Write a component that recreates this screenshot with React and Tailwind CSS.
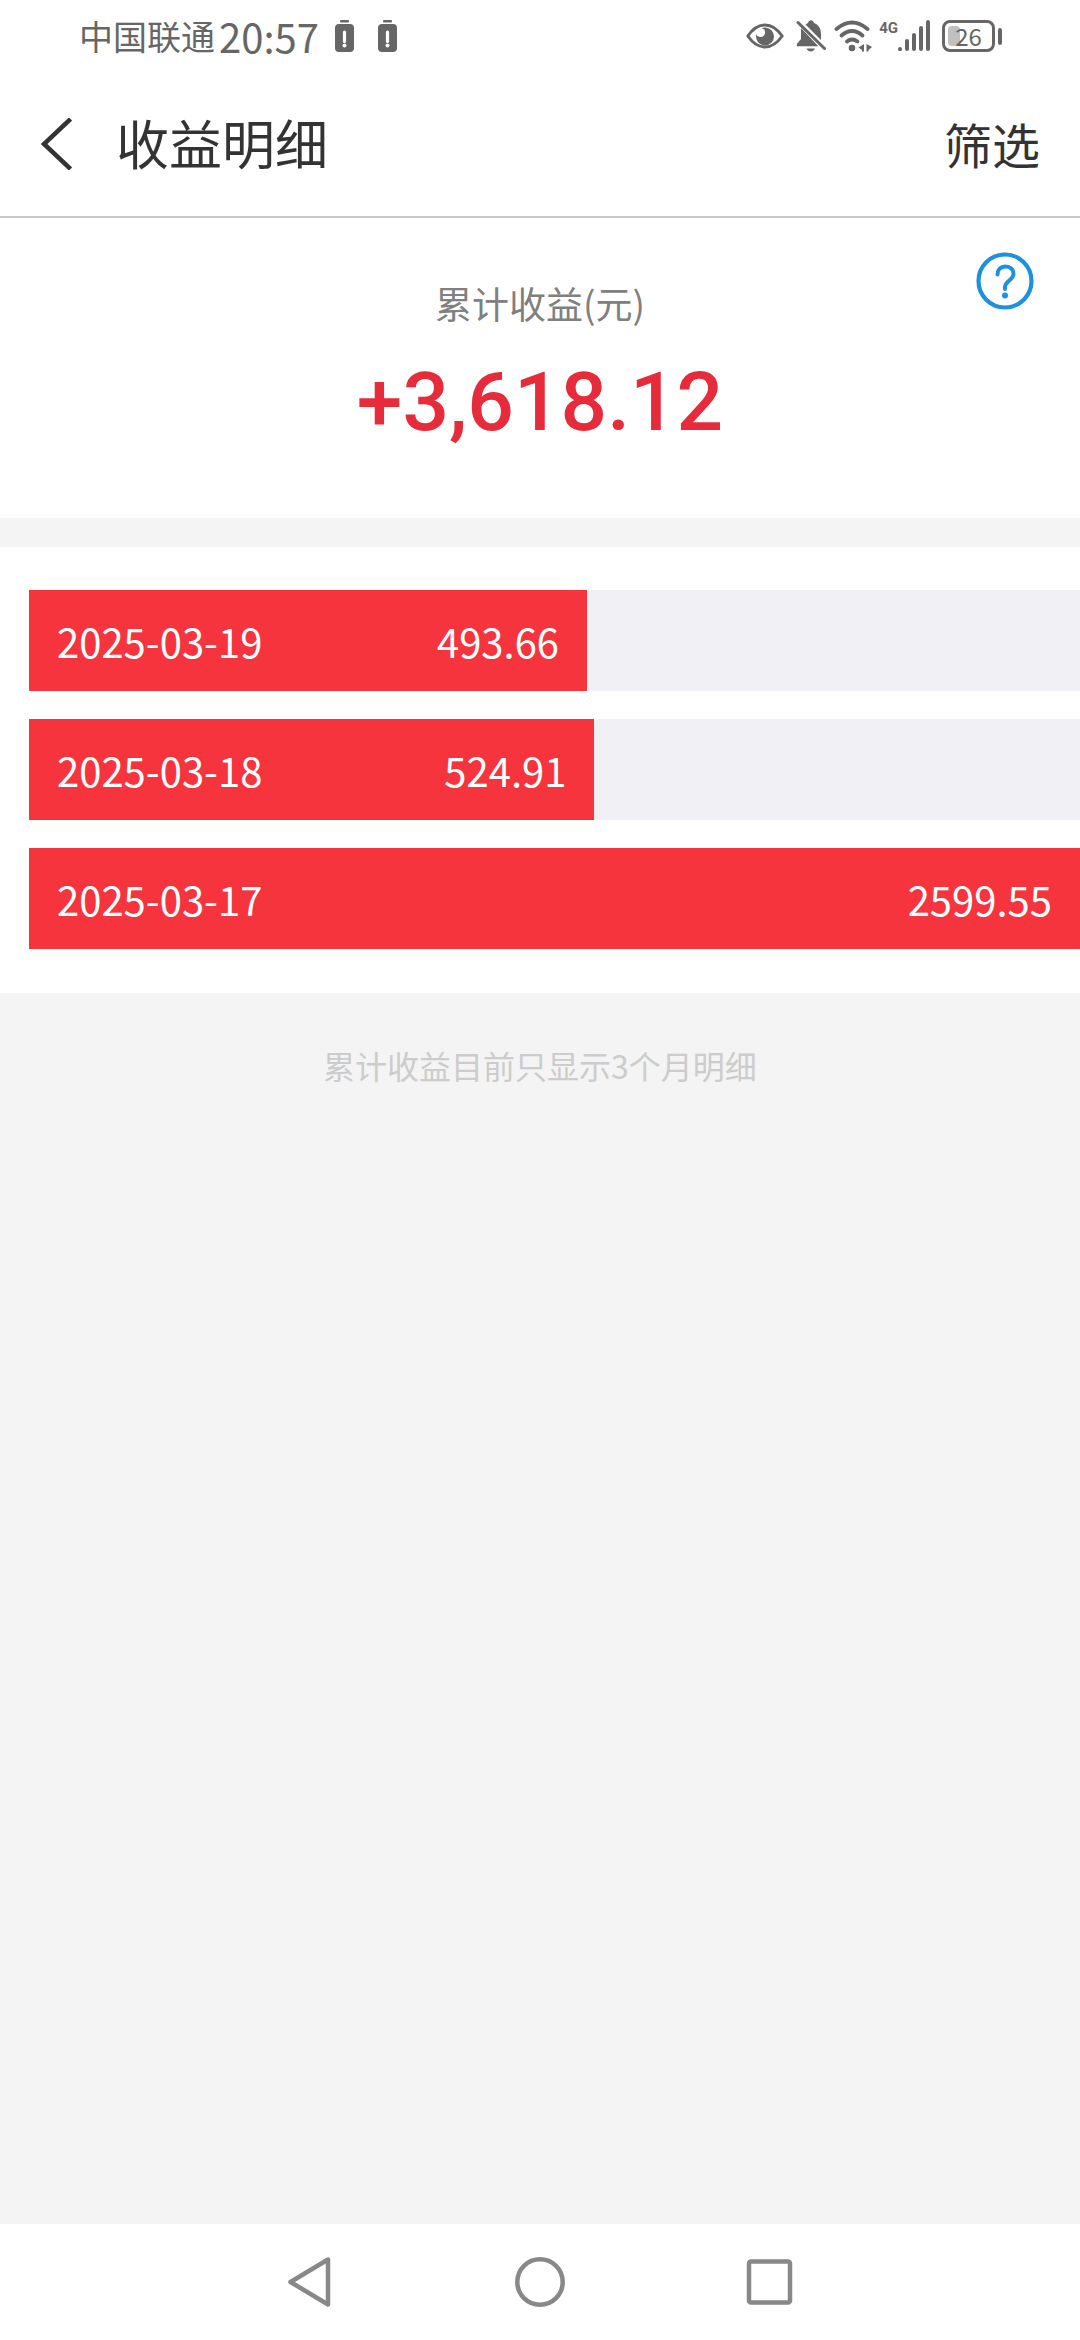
const records = [
  { date: "2025-03-19", amount: "493.66", percent: 53.1 },
  { date: "2025-03-18", amount: "524.91", percent: 53.8 },
  { date: "2025-03-17", amount: "2599.55", percent: 100 },
];

function BatteryAlert() {
  return (
    <svg width="19" height="32" viewBox="0 0 19 32">
      <rect x="5" y="0" width="9" height="2.600" rx="1" fill="#666" />
      <rect x="0" y="4" width="19" height="28" rx="4" fill="#666" />
      <path d="M9.500 12v9.500" stroke="#fff" strokeWidth="3.200" strokeLinecap="round" />
      <circle cx="9.500" cy="25.500" r="2" fill="#fff" />
    </svg>
  );
}

function EyeIcon() {
  return (
    <svg width="38" height="26" viewBox="0 0 38 26">
      <path
        d="M1.800 13C7 5.500 13 2 19 2s12 3.500 17.200 11C31 20.500 25 24 19 24S7 20.500 1.800 13z"
        fill="none"
        stroke="#666"
        strokeWidth="3"
        strokeLinejoin="round"
      />
      <circle cx="19" cy="13.500" r="9" fill="#666" />
      <circle cx="14.500" cy="9.500" r="4.600" fill="#fff" />
    </svg>
  );
}

function BellOffIcon() {
  return (
    <svg width="30" height="32" viewBox="0 0 30 32">
      <path d="M5 8v11L.800 24v2.300h21.500z" fill="#666" />
      <path d="M9.500 4.500L12 3c1-3.600 5-3.600 6 0 5 2 7 6 7 11v6z" fill="#666" />
      <path d="M2 2.500l26.500 26" stroke="#666" strokeWidth="3" strokeLinecap="round" />
      <path d="M10.500 28.500h8.500c-1.500 4-7 4-8.500 0z" fill="#666" />
    </svg>
  );
}

function WifiIcon() {
  return (
    <svg width="38" height="32" viewBox="0 0 38 32">
      <g fill="none" stroke="#666" strokeWidth="3.800" strokeLinecap="round">
        <path d="M2.500 9Q18-4 33.500 9" />
        <path d="M7.500 15.500Q18 6.500 28.500 15.500" />
        <path d="M13 21.500Q18 17.500 23.500 21.500" />
      </g>
      <circle cx="18" cy="28" r="3.300" fill="#666" />
      <path d="M30 24v7.500h-2V30l-3.500-2.500zM32.500 24v7.500h2V30l3.500-3z" fill="#666" />
    </svg>
  );
}

function SignalIcon() {
  return (
    <svg width="32" height="32" viewBox="0 0 32 32">
      <path
        d="M2 29v.2M9 21v8M16 15v14M23 8v21M30 2v27"
        stroke="#666"
        strokeWidth="4"
        strokeLinecap="round"
      />
    </svg>
  );
}

function StatusBar() {
  return (
    <div className="flex h-[72px] items-center justify-between bg-white pl-[79px] pr-[78px] text-[#666]">
      <div className="flex items-center">
        <span className="text-[34px] leading-none">中国联通</span>
        <span className="ml-1 text-[40px] leading-none">20:57</span>
        <div className="ml-4 flex gap-6">
          <BatteryAlert />
          <BatteryAlert />
        </div>
      </div>

      <div className="flex items-center">
        <EyeIcon />
        <div className="ml-3 flex gap-2">
          <BellOffIcon />
          <WifiIcon />
        </div>
        <span className="ml-[7px] self-start font-['Roboto',sans-serif] text-[15px] font-bold leading-4">
          4G
        </span>
        <SignalIcon />
        <div className="ml-3 flex items-center gap-[3px]">
          <div className="relative flex h-8 w-[53px] items-center justify-center rounded-lg border-[3px] border-[#666]">
            <div className="absolute left-[3px] top-[3px] h-5 w-3 rounded-sm bg-[#c0c0c0]" />
            <span className="relative text-[24px] leading-none">26</span>
          </div>
          <div className="h-[17px] w-1 rounded-full bg-[#666]" />
        </div>
      </div>
    </div>
  );
}

function Header() {
  return (
    <header className="flex h-[146px] items-center border-b-2 border-[#c7c7c7] bg-white px-10 text-[#333]">
      <button type="button" aria-label="返回">
        <svg width="32" height="52" viewBox="0 0 32 52" className="block">
          <path d="M30.500 1L4 26l26.500 25" fill="none" stroke="#333" strokeWidth="4.500" />
        </svg>
      </button>
      <h1 className="ml-11 flex-1 pb-1 text-[53px] leading-none">收益明细</h1>
      <button type="button" className="pb-0.5 text-[48px] leading-none">
        筛选
      </button>
    </header>
  );
}

function Summary() {
  return (
    <section className="grid h-[300px] grid-cols-[1fr_auto_1fr] bg-white">
      <div className="col-start-2 pt-[60px] text-center">
        <h2 className="text-[37px] leading-[50px] text-[#808080]">累计收益(元)</h2>
        <p className="mt-[26px] font-['Roboto',sans-serif] text-[82px] font-medium leading-[96px] text-[#e62c3b]">
          +3,618.12
        </p>
      </div>
      <button type="button" aria-label="帮助" className="mr-[46px] mt-[34px] self-start justify-self-end">
        <svg width="58" height="58" viewBox="0 0 58 58" className="block" fill="none">
          <circle cx="29" cy="29" r="26.500" stroke="#1e90e0" strokeWidth="4.200" />
          <path
            d="M21.500 22.500c0-5 3-8 8-8s8 3 8 7.500c0 6-8.500 7-8.500 13v2"
            stroke="#1e90e0"
            strokeWidth="4"
            strokeLinecap="round"
          />
          <circle cx="29" cy="43.500" r="3" fill="#1e90e0" />
        </svg>
      </button>
    </section>
  );
}

function Records() {
  return (
    <ul className="mt-[29px] flex flex-col gap-7 bg-white pb-11 pl-[29px] pt-[43px]">
      {records.map((item) => (
        <li key={item.date} className="bg-[#f0f0f5]">
          <div
            className="flex h-[101px] items-center justify-between bg-[#f6343d] px-7 text-[40px] leading-none text-white"
            style={{ width: `${item.percent}%` }}
          >
            <span>{item.date}</span>
            <span>{item.amount}</span>
          </div>
        </li>
      ))}
    </ul>
  );
}

function NavBar() {
  return (
    <nav className="flex h-[116px] items-center justify-center gap-[180px] bg-white">
      <button type="button" aria-label="后退">
        <svg width="50" height="50" viewBox="0 0 50 50" className="block">
          <path
            d="M43 2.500v45L5.500 25z"
            fill="none"
            stroke="#888"
            strokeWidth="4.500"
            strokeLinejoin="round"
          />
        </svg>
      </button>
      <button type="button" aria-label="主页">
        <svg width="50" height="50" viewBox="0 0 50 50" className="block">
          <circle cx="25" cy="25" r="22.700" fill="none" stroke="#888" strokeWidth="4.500" />
        </svg>
      </button>
      <button type="button" aria-label="最近任务">
        <svg width="50" height="50" viewBox="0 0 50 50" className="block">
          <rect x="4" y="4.500" width="41" height="41" rx="2" fill="none" stroke="#888" strokeWidth="4.500" />
        </svg>
      </button>
    </nav>
  );
}

export default function App() {
  return (
    <div className="flex min-h-screen flex-col bg-[#f4f4f4] font-['Noto_Sans_CJK_SC',sans-serif]">
      <StatusBar />
      <Header />
      <main className="flex-1">
        <Summary />
        <Records />
        <p className="mt-12 text-center text-[32px] leading-[48px] text-[#ccc]">
          累计收益目前只显示3个月明细
        </p>
      </main>
      <NavBar />
    </div>
  );
}
